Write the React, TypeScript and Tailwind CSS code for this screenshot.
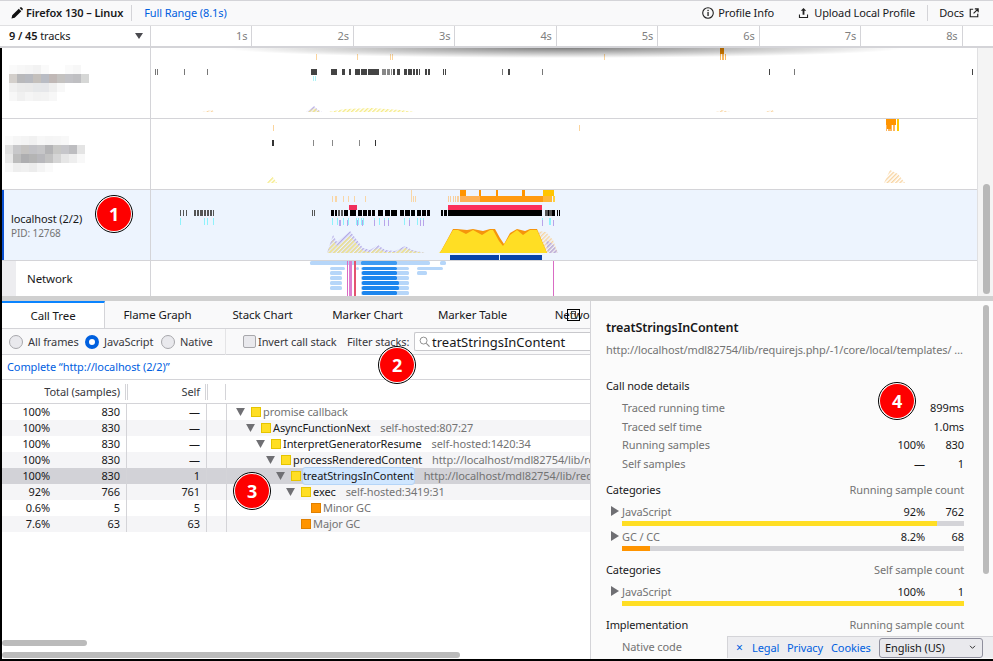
import React from "react";

type R = [number, number, number, number, string];

const seg = (list: [number, number][], y0: number, y1: number, c: string): R[] =>
  list.map(([a, b]) => [a, b, y0, y1, c] as R);

const Rects = ({ items, rx }: { items: R[]; rx?: number }) => (
  <>
    {items.map(([a, b, y0, y1, c], i) => (
      <rect key={i} x={a} width={b - a} y={y0} height={y1 - y0} fill={c} rx={rx} />
    ))}
  </>
);

const HatchDefs = ({ id }: { id: string }) => (
  <defs>
    <pattern id={id + "y"} width="3" height="3" patternUnits="userSpaceOnUse" patternTransform="rotate(45)">
      <rect width="1.4" height="3" fill="#f5ea82" />
    </pattern>
    <pattern id={id + "p"} width="3" height="3" patternUnits="userSpaceOnUse" patternTransform="rotate(45)">
      <rect width="1.4" height="3" fill="#b3a8e6" />
    </pattern>
    <pattern id={id + "o"} width="3" height="3" patternUnits="userSpaceOnUse" patternTransform="rotate(45)">
      <rect width="1.4" height="3" fill="#f8d3a0" />
    </pattern>
  </defs>
);

const Track1 = () => (
  <svg className="block h-[70px] w-[826px] shrink-0" viewBox="151 48 826 70">
    <HatchDefs id="a" />
    <Rects
      items={[
        ...seg([[316, 317], [357, 358], [390, 391], [392, 393], [604, 605]], 54, 60, "#fbd49c"),
        [720, 724, 48, 54, "#e58600"],
        ...seg([[720, 721], [722, 724], [725, 726]], 54, 60, "#f8b860"),
        ...seg([[155, 156], [157, 158], [184, 185], [207, 208], [502, 503], [542, 543], [794, 795]], 69, 75, "#777"),
        ...seg(
          [[311, 317], [331, 337], [342, 345], [349, 351], [355, 360], [361, 367], [368, 379], [393, 395], [397, 400], [404, 407], [408, 412], [413, 415], [416, 418], [419, 420], [425, 427], [428, 430], [443, 444], [445, 446], [508, 510], [769, 770], [972, 973]],
          69, 75, "#444"
        ),
        ...seg([[382, 386], [387, 390], [391, 392]], 69, 75, "#888"),
        ...seg([[313, 314], [315, 316]], 76, 81, "#aef3f5"),
      ]}
    />
    <path d="M306 112L314 106L318 110L322 112Z" fill="url(#ap)" />
    <path d="M308 112L314 108L320 112Z" fill="url(#ay)" />
    <path d="M328 112L345 109L372 108L400 110L415 112Z" fill="url(#ay)" />
    <path d="M202 112L212 110L214 112ZM716 112L722 110L730 112ZM765 112L772 110L775 112Z" fill="url(#ao)" />
  </svg>
);

const Track2 = () => (
  <svg className="block h-[70px] w-[826px] shrink-0" viewBox="151 119 826 70">
    <HatchDefs id="b" />
    <Rects
      items={[
        ...seg([[273, 274], [579, 580]], 125, 131, "#fbd49c"),
        [886, 896, 119, 125, "#ff9400"],
        ...seg([[886, 887], [888, 892], [893, 895]], 125, 131, "#fbb560"),
        [887, 891, 125, 129, "#ff9400"],
        [897, 899, 119, 131, "#ffc800"],
        ...seg([[272, 274], [375, 376]], 140, 146, "#333"),
        ...seg([[313, 314], [332, 333], [359, 360]], 140, 146, "#888"),
      ]}
    />
    <path d="M267 183L272 176L277 183Z" fill="url(#by)" />
    <path d="M884 183L890 170L898 174L905 183Z" fill="url(#bo)" />
  </svg>
);

const black3 = seg(
  [[331, 334], [335, 337], [344, 348], [350, 356], [358, 362], [363, 367], [368, 371], [372, 375], [378, 383], [385, 390], [391, 397], [400, 404], [405, 410], [411, 415], [417, 421], [422, 426], [427, 430], [441, 443], [444, 447], [448, 542], [548, 549], [552, 555], [557, 558], [559, 560]],
  210, 216, "#000"
);
const gray3 = seg(
  [[180, 181], [183, 184], [186, 187], [194, 196], [197, 199], [200, 203], [204, 206], [207, 209], [210, 212], [213, 214], [312, 313], [314, 315], [338, 340], [341, 343], [545, 548], [549, 552]],
  210, 216, "#555"
);
const cyan3 = seg(
  [[180, 181], [204, 205], [207, 208], [213, 214], [332, 333], [337, 338], [343, 344], [348, 349], [356, 357], [358, 359], [361, 362], [363, 364], [374, 375], [379, 380], [384, 385], [388, 389], [404, 405], [409, 410], [417, 418], [420, 421], [423, 424], [542, 543], [549, 551]],
  218, 225, "#8ff2fb"
);
const purple3 = seg(
  [[339, 341], [347, 348], [357, 358], [362, 363], [374, 375], [384, 385], [388, 389], [409, 410], [420, 421], [423, 424], [542, 543], [553, 554]],
  220, 226, "#b8a4ea"
);

const Track3 = () => (
  <svg className="block h-[70px] w-[826px] shrink-0" viewBox="151 190 826 70">
    <HatchDefs id="c" />
    <Rects
      items={[
        ...seg([[332, 333], [335, 337], [343, 344], [348, 349], [354, 355], [365, 366], [413, 414], [415, 416]], 196, 202, "#f9d6a6"),
        [411, 412, 190, 202, "#f9d6a6"],
        ...seg([[460, 466], [479, 481], [496, 498], [522, 525]], 190, 196, "#ff9400"),
        [543, 554, 190, 196, "#ffc400"],
        ...seg([[448, 449], [450, 451], [453, 454], [455, 456], [457, 459]], 196, 202, "#f8cf9c"),
        [460, 480, 196, 202, "#fdb055"],
        [480, 543, 196, 202, "#ff9a10"],
        [543, 552, 196, 202, "#ffb838"],
        [553, 555, 196, 202, "#ffd040"],
        [349, 357, 205, 210, "#f02e5b"],
        [448, 542, 205, 210, "#fb2f5a"],
        ...gray3,
        ...black3,
        ...cyan3,
        ...purple3,
        [450, 499, 255, 260, "#0a43a8"],
        [500, 542, 255, 260, "#0a43a8"],
      ]}
    />
    <path d="M327 253L333 235L337 242L350 231L363 248L370 250L378 245L385 250L395 251L405 246L412 250L425 253Z" fill="url(#cp)" />
    <path d="M327 253L333 240L337 246L350 236L363 251L370 252L378 248L385 252L395 252L405 248L412 251L425 253Z" fill="url(#cy)" />
    <path d="M537 231L546 232L553 240L558 253L546 253Z" fill="url(#co)" />
    <path d="M546 240L553 244L558 253L548 253Z" fill="url(#cp)" />
    <path d="M438 253L446 243L450 243L447 253Z" fill="url(#cy)" />
    <path d="M440 253L453 229L457 229L467 230L473 229L483 231L490 229L495 229L500 238L504 244L510 233L517 229L525 231L530 229L537 229L547 253Z" fill="#f5950c" />
    <path d="M440 253L453 230L458 230L466 234L473 230L482 235L490 230L493 230L499 241L503 246L510 235L517 230L523 235L530 230L537 230L547 253Z" fill="#ffde24" />
  </svg>
);

const netBars: R[] = [
  ...seg([[310, 387], [407, 430], [440, 446]], 261, 265, "#b6d6f9"),
  ...seg([[330, 345], [356, 359], [417, 443]], 267, 270, "#b6d6f9"),
  ...seg([[330, 342], [417, 427]], 271, 275, "#b6d6f9"),
  ...seg([[330, 342]], 276, 280, "#b6d6f9"),
  ...seg([[330, 342]], 281, 285, "#b6d6f9"),
  ...seg([[330, 342]], 286, 290, "#b6d6f9"),
  ...seg([[361, 409]], 261, 265, "#b6d6f9"),
  ...seg([[361, 409]], 267, 270, "#b6d6f9"),
  ...seg([[361, 409]], 271, 275, "#b6d6f9"),
  ...seg([[361, 409]], 276, 280, "#b6d6f9"),
  ...seg([[361, 409]], 281, 285, "#b6d6f9"),
  ...seg([[361, 409]], 286, 290, "#b6d6f9"),
  ...seg([[361, 409]], 291, 295, "#b6d6f9"),
  ...seg([[361, 397]], 261, 265, "#3f9bf2"),
  ...seg([[362, 397]], 267, 270, "#2a8df0"),
  ...seg([[362, 397]], 271, 275, "#1d86ee"),
  ...seg([[362, 397]], 276, 280, "#1d86ee"),
  ...seg([[362, 399]], 281, 285, "#1d86ee"),
  ...seg([[362, 399]], 286, 290, "#1d86ee"),
  ...seg([[362, 397]], 291, 295, "#1d86ee"),
];
const netLines: R[] = [
  [347, 348, 261, 296, "#d96bc4"],
  [349, 352, 261, 296, "#dd7fcf"],
  [354, 356, 261, 296, "#e4536f"],
  [553, 554, 261, 296, "#d96bc4"],
];

const Mosaic = ({ rows }: { rows: string[][] }) => (
  <svg width="88" height="36" viewBox="0 0 88 36" className="block">
    {rows.map((row, y) =>
      row.map((c, x) => <rect key={x + "-" + y} x={x * 8} y={y * 9} width="8.2" height="9.2" fill={c} />)
    )}
  </svg>
);

const mosaic1 = [
  ["#fafafa", "#f7f7f7", "#f5f5f5", "#f2f2f2", "#fafafa", "#fff", "#fff", "#fafafa", "#f7f7f7", "#fff", "#fff"],
  ["#d3cfcb", "#b9b9bb", "#b8bac0", "#c4c0bc", "#b9bcc4", "#c0b8b6", "#c4c2c0", "#c2c2c6", "#bfbfc2", "#d6d7d6", "#fff"],
  ["#f0f0f0", "#ebebeb", "#eaeaea", "#e6e8ea", "#e6e7ea", "#efefef", "#f8f8f8", "#fff", "#fff", "#fff", "#fff"],
  ["#f7f7f7", "#f0f0f0", "#f5f5f5", "#f2f2f2", "#f3f3f3", "#f7f7f7", "#fff", "#fff", "#fff", "#fff", "#fff"],
];
const mosaic2 = [
  ["#fafafa", "#f6f6f6", "#f4f4f4", "#f1f1f1", "#f7f7f7", "#f5f5f5", "#f6f6f6", "#f8f8f8", "#fff", "#fff", "#fff"],
  ["#e0e0e0", "#c8c8ca", "#c5c3c1", "#c2c2c6", "#c6c6c8", "#b4b4b6", "#c8c8c6", "#c6c6ca", "#bdbdc0", "#e4e4e4", "#fff"],
  ["#e8e8e8", "#bdbdbd", "#aeaeb0", "#b4b4b4", "#b8b8bc", "#c2c2c2", "#d5d5d5", "#e6e6e6", "#eeeeee", "#f8f8f8", "#fff"],
  ["#f7f7f7", "#eeeeee", "#f0f0f0", "#ececec", "#f4f4f4", "#fafafa", "#fff", "#fff", "#fff", "#fff", "#fff"],
];

const Badge = ({ n, cls }: { n: string; cls: string }) => (
  <div className={"absolute flex h-[38px] w-[38px] items-center justify-center rounded-full border border-black bg-white p-px " + cls}>
    <div className="flex h-full w-full items-center justify-center rounded-full bg-[#fe0000] text-[18px] font-bold text-white font-['Open_Sans',sans-serif]">
      {n}
    </div>
  </div>
);

const Tri = ({ cls }: { cls: string }) => (
  <svg viewBox="0 0 10 9" className={cls}>
    <path d="M0 0H10L5 9Z" fill="#6f6f73" />
  </svg>
);

const TriRight = () => (
  <svg viewBox="0 0 8 10" className="absolute left-[-11px] top-[2px] h-[10px] w-[8px]">
    <path d="M0 0L8 5L0 10Z" fill="#6f6f73" />
  </svg>
);

const rows = [
  { p: "100%", n: "830", s: "—", d: 0, name: "promise callback", loc: "", dim: true, c: "y", t: true },
  { p: "100%", n: "830", s: "—", d: 1, name: "AsyncFunctionNext", loc: "self-hosted:807:27", c: "y", t: true },
  { p: "100%", n: "830", s: "—", d: 2, name: "InterpretGeneratorResume", loc: "self-hosted:1420:34", c: "y", t: true },
  { p: "100%", n: "830", s: "—", d: 3, name: "processRenderedContent", loc: "http://localhost/mdl82754/lib/req", c: "y", t: true },
  { p: "100%", n: "830", s: "1", d: 4, name: "treatStringsInContent", loc: "http://localhost/mdl82754/lib/req", c: "y", t: true, sel: true },
  { p: "92%", n: "766", s: "761", d: 5, name: "exec", loc: "self-hosted:3419:31", c: "y", t: true },
  { p: "0.6%", n: "5", s: "5", d: 6, name: "Minor GC", loc: "", dim: true, c: "o", t: false },
  { p: "7.6%", n: "63", s: "63", d: 5, name: "Major GC", loc: "", dim: true, c: "o", t: false },
];

const indent = ["ml-[9px]", "ml-[19px]", "ml-[29px]", "ml-[39px]", "ml-[49px]", "ml-[59px]", "ml-[69px]"];

const Radio = ({ on }: { on?: boolean }) =>
  on ? (
    <span className="h-[14px] w-[14px] shrink-0 rounded-full border-[4px] border-[#0060df] bg-white" />
  ) : (
    <span className="h-[14px] w-[14px] shrink-0 rounded-full border border-[#a8a8ac] bg-[#e9e9ed]" />
  );

const Row = ({ l, a, b, cls }: { l: string; a?: string; b: string; cls: string }) => (
  <div className={"flex items-center pl-[16px] " + cls}>
    <span className="flex-1 text-[#737373]">{l}</span>
    {a !== undefined && <span className="text-[#18181a]">{a}</span>}
    <span className="ml-[1px] w-[38px] text-right text-[#18181a]">{b}</span>
  </div>
);

const CatRow = ({ l, a, b, w, c, cls }: { l: string; a: string; b: string; w: string; c: string; cls: string }) => (
  <div className={"pl-[16px] " + cls}>
    <div className="relative flex h-[15px] items-center">
      <TriRight />
      <span className="flex-1 text-[#737373]">{l}</span>
      <span className="text-[#18181a]">{a}</span>
      <span className="ml-[1px] w-[38px] text-right text-[#18181a]">{b}</span>
    </div>
    <div className="mt-[2px] h-[5px] bg-[#d4d4d8]">
      <div className={"h-full " + w + " " + c} />
    </div>
  </div>
);

export default function App() {
  const tabs = ["Flame Graph", "Stack Chart", "Marker Chart", "Marker Table", "Network"];
  return (
    <div className="relative h-[661px] w-[993px] overflow-hidden bg-black text-[11px] leading-[16px] tracking-[-0.1px] text-[#18181a] font-['Noto_Sans',sans-serif]">
      {/* top bar */}
      <div className="flex h-[26px] items-center border-y border-y-[#d4d4d8] border-b-[#e0e0e2] bg-[#f9f9fa] pl-[11px] pr-[14px]">
        <svg viewBox="0 0 12 12" className="h-[12px] w-[12px]">
          <path d="M0.5 11.5L1.2 8.3L7.8 1.7L10.3 4.2L3.7 10.8ZM8.6 0.9L9.5 0.3C9.8 0.1 10.1 0.1 10.4 0.3L11.7 1.6C11.9 1.9 11.9 2.2 11.7 2.5L11.1 3.4Z" fill="#111" />
        </svg>
        <span className="ml-[3px] font-semibold">Firefox 130 – Linux</span>
        <span className="ml-[8px] h-[16px] w-px bg-[#d4d4d8]" />
        <span className="ml-[12px] text-[#0060df]">Full Range (8.1s)</span>
        <span className="flex-1" />
        <svg viewBox="0 0 12 12" className="h-[12px] w-[12px]">
          <circle cx="6" cy="6" r="5.3" fill="none" stroke="#222" strokeWidth="1.1" />
          <rect x="5.4" y="5" width="1.3" height="4" fill="#222" />
          <rect x="5.4" y="2.8" width="1.3" height="1.3" fill="#222" />
        </svg>
        <span className="ml-[4px]">Profile Info</span>
        <svg viewBox="0 0 12 12" className="ml-[24px] h-[12px] w-[11px]">
          <path d="M6 0.5L9 3.6H7V8H5V3.6H3ZM1 7.5H2.2V10.3H9.8V7.5H11V11.5H1Z" fill="#222" />
        </svg>
        <span className="ml-[5px]">Upload Local Profile</span>
        <span className="ml-[12px] h-[16px] w-px bg-[#d4d4d8]" />
        <span className="ml-[11px]">Docs</span>
        <svg viewBox="0 0 12 12" className="ml-[5px] h-[10px] w-[10px]">
          <path d="M5 1.5H1.5V10.5H10.5V7M7 1H11V5M11 1L5.5 6.5" fill="none" stroke="#222" strokeWidth="1.4" />
        </svg>
      </div>

      {/* ruler */}
      <div className="flex h-[22px] border-b-[2px] border-b-[#d4d4d8] bg-white">
        <div className="flex w-[151px] shrink-0 items-center border-r border-r-[#d4d4d8] pl-[9px] pr-[7px]">
          <span className="flex-1">
            <b className="font-semibold">9 / 45</b> tracks
          </span>
          <svg viewBox="0 0 8 6" className="h-[6px] w-[8px]">
            <path d="M0 0H8L4 6Z" fill="#4a4a4f" />
          </svg>
        </div>
        {["1s", "2s", "3s", "4s", "5s", "6s", "7s", "8s"].map((t) => (
          <div key={t} className="flex w-[101.45px] shrink-0 items-center justify-end border-r border-r-[#d4d4d8] pr-[4px] text-[11px] text-[#808080]">
            {t}
          </div>
        ))}
      </div>

      {/* tracks */}
      <div className="relative ml-[2px] flex h-[248px] bg-[#f4f4f4]">
        <div className="w-[975px] shrink-0">
          <div className="flex h-[71px] border-b border-b-[#d4d4d8] bg-white">
            <div className="flex w-[149px] shrink-0 items-center border-r border-r-[#d4d4d8] pl-[7px]">
              <Mosaic rows={mosaic1} />
            </div>
            <Track1 />
          </div>
          <div className="flex h-[71px] border-b border-b-[#d4d4d8] bg-white">
            <div className="flex w-[149px] shrink-0 items-center border-r border-r-[#d4d4d8] pl-[3px]">
              <Mosaic rows={mosaic2} />
            </div>
            <Track2 />
          </div>
          <div className="flex h-[71px] border-b border-b-[#d4d4d8] bg-[#edf4fe]">
            <div className="flex w-[149px] shrink-0 flex-col justify-center border-l-[2px] border-r border-l-[#0a4fd0] border-r-[#d4d4d8] pl-[7px]">
              <span className="text-[11px]">localhost (2/2)</span>
              <span className="text-[10px] leading-[12px] text-[#737373]">PID: 12768</span>
            </div>
            <Track3 />
          </div>
          <div className="flex h-[35px] bg-white">
            <div className="h-[35px] w-[14px] shrink-0 bg-[#ededf0]" />
            <div className="flex w-[135px] shrink-0 items-center border-r border-r-[#d4d4d8] pl-[11px] text-[11.5px]">
              Network
            </div>
            <svg className="block h-[35px] w-[826px] shrink-0" viewBox="151 261 826 35">
              <Rects items={netBars} rx={1.5} />
              <Rects items={netLines} />
            </svg>
          </div>
        </div>
        <div className="relative flex-1 border-l border-l-[#e0e0e2] bg-[#f4f4f4]">
          <div className="absolute bottom-[2px] left-[5px] h-[110px] w-[7px] rounded-full bg-[#b8b8b8]" />
        </div>
      </div>

      {/* splitter */}
      <div className="ml-[2px] h-[5px] bg-[#d0d0d0]" />

      {/* bottom */}
      <div className="ml-[2px] flex h-[358px]">
        <div className="w-[588px] shrink-0 overflow-hidden bg-white">
          {/* tabs */}
          <div className="flex h-[28px] border-b border-b-[#d4d4d8] bg-[#f9f9fa] text-[11.5px]">
            <div className="flex w-[103px] shrink-0 items-center justify-center border-r border-t-[2px] border-r-[#d4d4d8] border-t-[#0a84ff] bg-white">
              Call Tree
            </div>
            {tabs.map((t) => (
              <div key={t} className="flex w-[105px] shrink-0 items-center justify-center whitespace-nowrap">
                {t}
              </div>
            ))}
          </div>
          {/* settings */}
          <div className="flex h-[26px] items-center border-b border-b-[#d4d4d8] bg-[#f9f9fa] pl-[7px]">
            <Radio />
            <span className="ml-[5px] w-[57px] shrink-0 text-[#38383d]">All frames</span>
            <Radio on />
            <span className="ml-[5px] w-[57px] shrink-0 text-[#38383d]">JavaScript</span>
            <Radio />
            <span className="ml-[5px] w-[45px] shrink-0 text-[#38383d]">Native</span>
            <span className="h-[26px] w-px bg-[#e4e4e6]" />
            <span className="ml-[17px] h-[13px] w-[13px] shrink-0 rounded-[2px] border border-[#a8a8ac] bg-[#e9e9ed]" />
            <span className="ml-[2px] w-[89px] shrink-0 text-[#38383d]">Invert call stack</span>
            <span className="w-[67px] shrink-0 whitespace-nowrap text-[#38383d]">Filter stacks:</span>
            <div className="flex h-[19px] flex-1 items-center rounded-l-[2px] border border-r-0 border-[#c8c8cc] bg-white pl-[4px]">
              <svg viewBox="0 0 12 12" className="h-[11px] w-[11px] shrink-0">
                <circle cx="5" cy="5" r="3.8" fill="none" stroke="#888" strokeWidth="1" />
                <path d="M8 8L11.5 11.5" stroke="#888" strokeWidth="1.2" />
              </svg>
              <span className="ml-[2px] text-[13px] tracking-normal">treatStringsInContent</span>
            </div>
          </div>
          {/* breadcrumb */}
          <div className="flex h-[25px] items-center border-b border-b-[#d4d4d8] bg-white pl-[5px] text-[#0060df]">
            Complete “http://localhost (2/2)”
          </div>
          {/* header */}
          <div className="flex h-[24px] items-center border-b border-b-[#d4d4d8] bg-white text-[#38383d]">
            <span className="w-[118px] text-right">Total (samples)</span>
            <span className="ml-[5px] h-[16px] w-[3px] border-x border-x-[#d4d4d8]" />
            <span className="w-[72px] text-right">Self</span>
            <span className="ml-[5px] h-[16px] w-[3px] border-x border-x-[#d4d4d8]" />
            <span className="ml-[17px] h-[16px] w-px bg-[#d4d4d8]" />
          </div>
          {/* rows */}
          {rows.map((r, i) => (
            <div
              key={i}
              className={
                "flex h-[16px] items-center whitespace-nowrap " +
                (r.sel ? "bg-[#d2d2d7]" : i % 2 === 1 ? "bg-[#f5f5f7]" : "bg-white")
              }
            >
              <span className="w-[48px] shrink-0 text-right">{r.p}</span>
              <span className="w-[70px] shrink-0 text-right">{r.n}</span>
              <span className="ml-[6px] h-[16px] w-px shrink-0 bg-[#d4d4d8]" />
              <span className="w-[73px] shrink-0 text-right">{r.s}</span>
              <span className="ml-[6px] h-[16px] w-px shrink-0 bg-[#d4d4d8]" />
              <span className="ml-[19px] h-[16px] w-px shrink-0 bg-[#d4d4d8]" />
              <span className={"shrink-0 " + indent[r.d]} />
              {r.t ? <Tri cls="h-[8px] w-[9px] shrink-0" /> : <span className="h-[8px] w-[9px] shrink-0" />}
              <span
                className={
                  "ml-[6px] h-[10px] w-[10px] shrink-0 border " +
                  (r.c === "y" ? "border-[#e5c400] bg-[#ffde24]" : "border-[#e08000] bg-[#ff9400]")
                }
              />
              <span
                className={
                  "ml-[2px] shrink-0 " +
                  (r.sel ? "rounded-[2px] bg-[#cfe6ff] outline outline-[#b5d5f8] " : "") +
                  (r.dim ? "text-[#737373]" : "text-[#18181a]")
                }
              >
                {r.name}
              </span>
              {r.loc && <span className="ml-[10px] shrink-0 text-[#737373]">{r.loc}</span>}
            </div>
          ))}
          {/* scrollbars */}
          <div className="mt-[108px] h-[6px] w-[85px] rounded-full bg-[#bbb]" />
          <div className="mt-[6px] h-[6px] w-[458px] rounded-full bg-[#bbb]" />
        </div>

        {/* sidebar */}
        <div className="relative flex-1 overflow-hidden border-l border-l-[#d4d4d8] bg-[#fbfbfb] pl-[15px] pr-[29px]">
          <div className="mt-[19px] text-[12.5px] font-semibold leading-[16px]">treatStringsInContent</div>
          <div className="mt-[6px] truncate text-[#737373]">http://localhost/mdl82754/lib/requirejs.php/-1/core/local/templates/ …</div>
          <div className="mt-[20px]">Call node details</div>
          <Row cls="mt-[6px] h-[16px]" l="Traced running time" b="899ms" />
          <Row cls="mt-[3px] h-[16px]" l="Traced self time" b="1.0ms" />
          <Row cls="mt-[2px] h-[16px]" l="Running samples" a="100%" b="830" />
          <Row cls="mt-[3px] h-[16px]" l="Self samples" a="—" b="1" />
          <div className="mt-[10px] flex justify-between">
            <span>Categories</span>
            <span className="text-[#737373]">Running sample count</span>
          </div>
          <CatRow cls="mt-[6px]" l="JavaScript" a="92%" b="762" w="w-[92%]" c="bg-[#ffde24]" />
          <CatRow cls="mt-[3px]" l="GC / CC" a="8.2%" b="68" w="w-[8.2%]" c="bg-[#ff9400]" />
          <div className="mt-[11px] flex justify-between">
            <span>Categories</span>
            <span className="text-[#737373]">Self sample count</span>
          </div>
          <CatRow cls="mt-[6px]" l="JavaScript" a="100%" b="1" w="w-full" c="bg-[#ffde24]" />
          <div className="mt-[11px] flex justify-between">
            <span>Implementation</span>
            <span className="text-[#737373]">Running sample count</span>
          </div>
          <div className="mt-[6px] pl-[16px] text-[#737373]">Native code</div>
          <div className="absolute right-[4px] top-[4px] h-[269px] w-[6px] rounded-full bg-[#bbb]" />
        </div>
      </div>

      {/* footer links popup */}
      <div className="absolute left-[727px] top-[636px] flex h-[22px] w-[266px] items-center border-l border-t border-[#d4d4d8] bg-[#ededf0] pl-[8px] text-[#0060df]">
        <span className="w-[6px] text-[12px]">×</span>
        <span className="ml-[10px] w-[26px]">Legal</span>
        <span className="ml-[9px] w-[35px] whitespace-nowrap">Privacy</span>
        <span className="ml-[9px] w-[37px] whitespace-nowrap">Cookies</span>
        <div className="ml-[11px] flex h-[20px] w-[104px] items-center justify-between rounded-[3px] border border-[#8f8f9d] bg-[#e9e9ed] pl-[5px] pr-[6px] text-[#18181a]">
          English (US)
          <svg viewBox="0 0 8 6" className="h-[5px] w-[7px]">
            <path d="M1 1L4 4L7 1" fill="none" stroke="#333" strokeWidth="1.2" />
          </svg>
        </div>
      </div>

      {/* network tab overlay glyph */}
      <div className="absolute left-[567px] top-[309px] h-[12px] w-[13px] border border-black">
        <div className="ml-[3px] mt-[1px] h-[8px] w-[5px] border border-[#444]" />
      </div>

      {/* shadow of scroll overflow */}
      <div className="pointer-events-none absolute left-[151px] top-[48px] h-[12px] w-[826px] bg-[radial-gradient(ellipse_340px_10px_at_50%_0,rgba(0,0,0,0.5),rgba(0,0,0,0))]" />

      <Badge n="1" cls="left-[95px] top-[195px]" />
      <Badge n="2" cls="left-[378px] top-[346px]" />
      <Badge n="3" cls="left-[233px] top-[472px]" />
      <Badge n="4" cls="left-[878px] top-[382px]" />
    </div>
  );
}
